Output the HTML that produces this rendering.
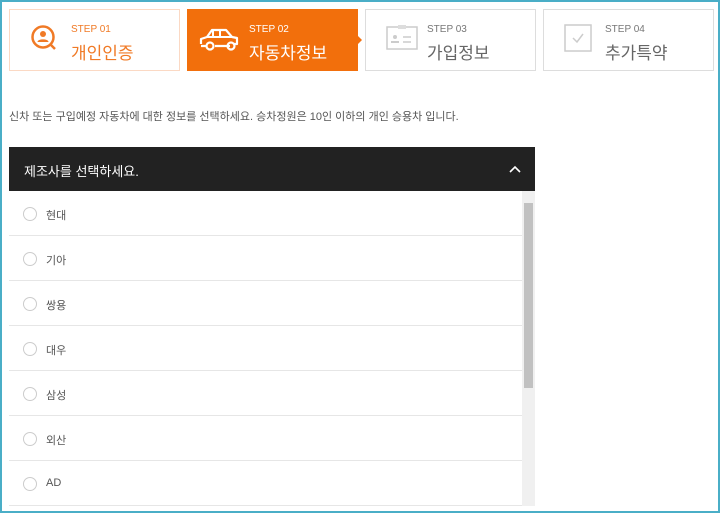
<!DOCTYPE html>
<html><head><meta charset="utf-8"><style>
*{margin:0;padding:0;box-sizing:border-box}
body{width:720px;height:513px;overflow:hidden;background:#fff;font-family:"Liberation Sans","Noto Sans CJK KR",sans-serif;position:relative}
.frame{position:absolute;left:0;top:0;width:720px;height:513px;border:2px solid #4aaec7;border-top-width:2px}
.step{position:absolute;top:9px;width:171px;height:62px;border:1px solid #ddd;background:#fff}
.step .s{position:absolute;left:61px;top:14px;font-size:10px;color:#777}
.step .t{position:absolute;left:61px;top:29px;font-size:17px;color:#666}
.step svg{position:absolute;left:20px;top:14px}
.desc{position:absolute;left:9px;top:108px;font-size:11px;color:#555}
.hd{position:absolute;left:9px;top:147px;width:526px;height:44px;background:#222;color:#fff;font-size:13px;padding:14px 0 0 15px}
.list{position:absolute;left:9px;top:191px;width:513px}
.row{height:45px;border-bottom:1px solid #e6e6e6;position:relative;font-size:11px;color:#555}
.row i{position:absolute;left:14px;top:16px;width:14px;height:14px;border:1px solid #ccc;border-radius:50%}
.row span{position:absolute;left:37px;top:16px}
.sb{position:absolute;left:522px;top:191px;width:13px;height:315px;background:#f0f0f0}
.th{position:absolute;left:2px;top:12px;width:9px;height:185px;background:#c1c1c1}
</style></head><body>
<div class="step" style="left:9px;border-color:#fbd9c4">
<svg width="30" height="32" viewBox="0 0 30 32"><circle cx="13" cy="13" r="10.5" fill="none" stroke="#f07a26" stroke-width="2.5"/><circle cx="13" cy="10" r="3" fill="#f07a26"/><path d="M7.5 18c0-3.5 11-3.5 11 0z" fill="#f07a26"/><path d="M21 21l4 4" stroke="#f07a26" stroke-width="2.5"/></svg>
<div class="s" style="color:#f07a26">STEP 01</div><div class="t" style="color:#f07a26">개인인증</div></div>
<div class="step" style="left:187px;background:#f26f0c;border-color:#f26f0c">
<svg width="42" height="30" viewBox="0 0 42 30" style="left:10px;top:16px"><path d="M3 18v-5l6-2 5-7h14l6 7 5 1v6h-3M11 20h-0M32 20H17M8 20H3" fill="none" stroke="#fff" stroke-width="2.2" stroke-linejoin="round"/><circle cx="12" cy="20" r="3.5" fill="none" stroke="#fff" stroke-width="2.2"/><circle cx="33" cy="20" r="3.5" fill="none" stroke="#fff" stroke-width="2.2"/><path d="M15 5v6M22 5v6M9 11h25" stroke="#fff" stroke-width="2"/></svg>
<div class="s" style="color:#fff">STEP 02</div><div class="t" style="color:#fff">자동차정보</div></div>
<div style="position:absolute;left:357px;top:35px;width:0;height:0;border-left:5px solid #f26f0c;border-top:5px solid transparent;border-bottom:5px solid transparent"></div>
<div class="step" style="left:365px">
<svg width="32" height="26" viewBox="0 0 32 26"><rect x="1" y="3" width="30" height="22" fill="none" stroke="#ccc" stroke-width="1.5"/><rect x="12" y="1" width="8" height="4" fill="#ddd"/><circle cx="9" cy="13" r="2" fill="#ccc"/><path d="M5 19h8v-2H5z" fill="#ccc"/><path d="M17 13h8M17 18h8" stroke="#ccc" stroke-width="1.5"/></svg>
<div class="s">STEP 03</div><div class="t">가입정보</div></div>
<div class="step" style="left:543px">
<svg width="30" height="30" viewBox="0 0 30 30"><rect x="1" y="1" width="26" height="26" fill="none" stroke="#ccc" stroke-width="1.5"/><path d="M9 14l4 4 6-8" fill="none" stroke="#ccc" stroke-width="1.5"/></svg>
<div class="s">STEP 04</div><div class="t">추가특약</div></div>
<div class="desc">신차 또는 구입예정 자동차에 대한 정보를 선택하세요. 승차정원은 10인 이하의 개인 승용차 입니다.</div>
<div class="hd">제조사를 선택하세요.<svg width="12" height="8" viewBox="0 0 12 8" style="position:absolute;right:14px;top:18px"><path d="M1 7l5-5 5 5" fill="none" stroke="#fff" stroke-width="1.6"/></svg></div>
<div class="list">
<div class="row"><i></i><span>현대</span></div>
<div class="row"><i></i><span>기아</span></div>
<div class="row"><i></i><span>쌍용</span></div>
<div class="row"><i></i><span>대우</span></div>
<div class="row"><i></i><span>삼성</span></div>
<div class="row"><i></i><span>외산</span></div>
<div class="row"><i></i><span>AD</span></div>
</div>
<div class="sb"><div class="th"></div></div>
<div class="frame"></div>
</body></html>
